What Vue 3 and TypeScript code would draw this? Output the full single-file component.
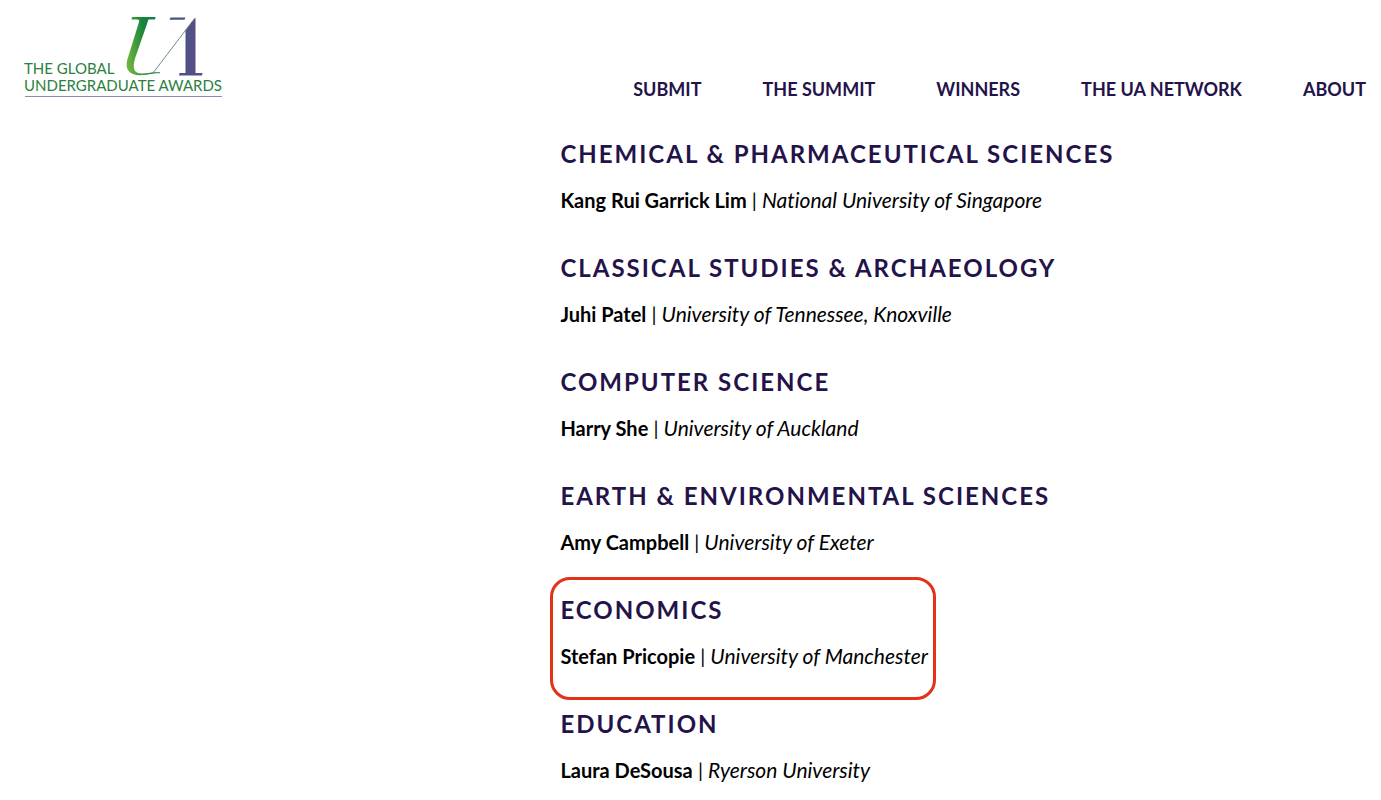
<script setup lang="ts">
interface Winner {
  category: string
  name: string
  university: string
  highlighted?: boolean
}

const links: string[] = ['Submit', 'The Summit', 'Winners', 'The UA Network', 'About']

const winners: Winner[] = [
  { category: 'Chemical & Pharmaceutical Sciences', name: 'Kang Rui Garrick Lim', university: 'National University of Singapore' },
  { category: 'Classical Studies & Archaeology', name: 'Juhi Patel', university: 'University of Tennessee, Knoxville' },
  { category: 'Computer Science', name: 'Harry She', university: 'University of Auckland' },
  { category: 'Earth & Environmental Sciences', name: 'Amy Campbell', university: 'University of Exeter' },
  { category: 'Economics', name: 'Stefan Pricopie', university: 'University of Manchester', highlighted: true },
  { category: 'Education', name: 'Laura DeSousa', university: 'Ryerson University' },
]
</script>

<template>
  <div class="page">
    <header class="header">
      <a class="logo" href="#" aria-label="The Global Undergraduate Awards">
        <svg width="200" height="84" viewBox="24 14 200 84">
          <defs>
            <linearGradient id="leaf" x1="0" y1="0.6" x2="1" y2="0.3">
              <stop offset="0" stop-color="#6db33f" />
              <stop offset="0.6" stop-color="#16833c" />
              <stop offset="1" stop-color="#1b7a45" />
            </linearGradient>
            <linearGradient id="violet" x1="0" y1="0" x2="1" y2="0">
              <stop offset="0" stop-color="#46567f" />
              <stop offset="1" stop-color="#5f4a8c" />
            </linearGradient>
          </defs>
          <path fill="url(#leaf)" d="M132 17H155.500L155 19.500H148.500L135.500 57C132 68 133.500 73.500 142 73.500C147 73.500 151 72.500 154 72.300H160V73.300H156C151 73.600 147 75.200 140 75.200C129 75.200 124.500 69 127.500 59L139 22C139.500 20.300 139 19.500 137 19.500H131.500Z" />
          <path fill="none" stroke="#47716b" stroke-width="0.8" d="M153 73L194.500 18.500" />
          <path fill="#46567f" d="M170.500 17.500H185.500L184.500 19.800H169.500Z" />
          <path fill="url(#violet)" d="M195.500 17.500V73H202.500L202 75.500H179L179.500 73H185.500V30.500Z" />
          <text x="24" y="74">THE GLOBAL</text>
          <text x="24" y="91">UNDERGRADUATE AWARDS</text>
          <path fill="none" stroke="#9a86a8" d="M25 96.500H222" />
        </svg>
      </a>
      <nav class="nav" aria-label="Main">
        <a v-for="link in links" :key="link" href="#">{{ link }}</a>
      </nav>
    </header>
    <main class="winners">
      <section v-for="w in winners" :key="w.category" class="winner" :class="{ highlighted: w.highlighted }">
        <h2>{{ w.category }}</h2>
        <p><strong>{{ w.name }}</strong> | <em>{{ w.university }}</em></p>
      </section>
    </main>
  </div>
</template>

<style>
body {
  margin: 0;
  background: #fff;
}

html {
  overflow: hidden;
}
</style>

<style scoped>
.page {
  font-family: Lato, "Liberation Sans", sans-serif;
  font-variant-ligatures: none;
  color: #000;
}

.header {
  display: flex;
  justify-content: space-between;
  align-items: flex-end;
  padding: 14px 15px 0 24px;
}

.logo svg {
  display: block;
}

.logo text {
  font-size: 15px;
  fill: #2b8040;
}

.nav {
  display: flex;
  gap: 61px;
}

.nav a {
  font-size: 18px;
  line-height: 18px;
  font-weight: 700;
  color: #24134a;
  text-transform: uppercase;
  text-decoration: none;
}

.winners {
  display: flex;
  flex-direction: column;
  align-items: flex-start;
  margin-left: 40%;
  padding: 24px 0 0 8px;
}

.winner {
  position: relative;
  padding: 16px 0 21px;
}

.winner h2 {
  margin: 0;
  font-size: 24px;
  line-height: 32px;
  font-weight: 700;
  letter-spacing: 2px;
  color: #24134a;
  text-transform: uppercase;
}

.winner p {
  margin: 15px 0 0;
  font-size: 20px;
  line-height: 30px;
}

.winner em {
  font-size: 21px;
  line-height: 20px;
}

.highlighted::after {
  content: "";
  position: absolute;
  inset: -1px -8px -8px -10px;
  border: 3px solid #e33217;
  border-radius: 20px;
  pointer-events: none;
}
</style>
